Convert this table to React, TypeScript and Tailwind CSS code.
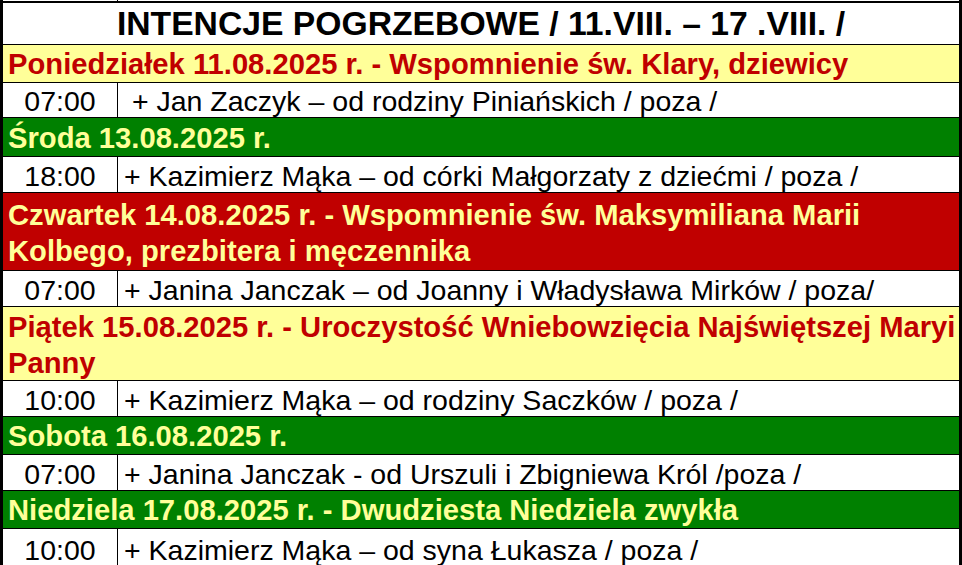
const rows = [
  { kind: 'yellow', h: 'h-[38px]', lines: ['Poniedziałek 11.08.2025 r. - Wspomnienie św. Klary, dziewicy'] },
  { kind: 'mass', h: 'h-[35px]', time: '07:00', text: '\u00a0+ Jan Zaczyk – od rodziny Piniańskich / poza /' },
  { kind: 'green', h: 'h-[39px]', lines: ['Środa 13.08.2025 r.'] },
  { kind: 'mass', h: 'h-[36px]', time: '18:00', text: '+ Kazimierz Mąka – od córki Małgorzaty z dziećmi / poza /' },
  {
    kind: 'red',
    h: 'h-[78px]',
    lines: ['Czwartek 14.08.2025 r. - Wspomnienie św. Maksymiliana Marii', 'Kolbego, prezbitera i męczennika'],
  },
  { kind: 'mass', h: 'h-[36px]', time: '07:00', text: '+ Janina Janczak – od Joanny i Władysława Mirków / poza/' },
  {
    kind: 'yellow',
    h: 'h-[74px]',
    lines: ['Piątek 15.08.2025 r. - Uroczystość Wniebowzięcia Najświętszej Maryi', 'Panny'],
  },
  { kind: 'mass', h: 'h-[36px]', time: '10:00', text: '+ Kazimierz Mąka – od rodziny Saczków / poza /' },
  { kind: 'green', h: 'h-[38px]', lines: ['Sobota 16.08.2025 r.'] },
  { kind: 'mass', h: 'h-[36px]', time: '07:00', text: '+ Janina Janczak - od Urszuli i Zbigniewa Król /poza /' },
  { kind: 'green', h: 'h-[38px]', lines: ['Niedziela 17.08.2025 r. - Dwudziesta Niedziela zwykła'] },
  { kind: 'mass', h: 'h-[40px]', time: '10:00', text: '+ Kazimierz Mąka – od syna Łukasza / poza /' },
];

const dayStyle: Record<string, string> = {
  yellow: 'bg-[#ffff99] text-[#c00000]',
  green: 'bg-[#008000] text-[#ffff99]',
  red: 'bg-[#c00000] text-[#ffff99]',
};

export default function App() {
  return (
    <div className="w-[962px] h-[565px] overflow-hidden bg-white font-['Liberation_Sans',Arial,sans-serif] text-black">
      {/* sliver of the previous row */}
      <div className="h-px flex border-x-[3px] border-black">
        <div className="w-[115px] border-r border-black" />
      </div>

      <div className="border-x-[3px] border-t-[2px] border-black">
        {/* Title */}
        <div className="h-[42px] flex items-center justify-center border-b border-black text-[33.7px] font-bold whitespace-nowrap">
          INTENCJE POGRZEBOWE / 11.VIII. – 17 .VIII. /
        </div>

        {rows.map((r, i) =>
          r.kind === 'mass' ? (
            <div key={i} className={`${r.h} flex border-b border-black bg-white text-[28.5px]`}>
              <div className="w-[115px] shrink-0 border-r border-black flex items-center justify-center pt-[3px]">
                {r.time}
              </div>
              <div className="flex-1 flex items-center pl-[6px] pt-[3px] whitespace-nowrap">{r.text}</div>
            </div>
          ) : (
            <div
              key={i}
              className={`${r.h} ${dayStyle[r.kind]} border-b border-black pl-[5px] text-[29.2px] font-bold leading-[36px] whitespace-nowrap flex flex-col justify-center ${
                r.lines && r.lines.length > 1 ? 'pt-[2px]' : 'pt-[1px]'
              }`}
            >
              {r.lines?.map((l) => (
                <div key={l}>{l}</div>
              ))}
            </div>
          )
        )}
      </div>
    </div>
  );
}
